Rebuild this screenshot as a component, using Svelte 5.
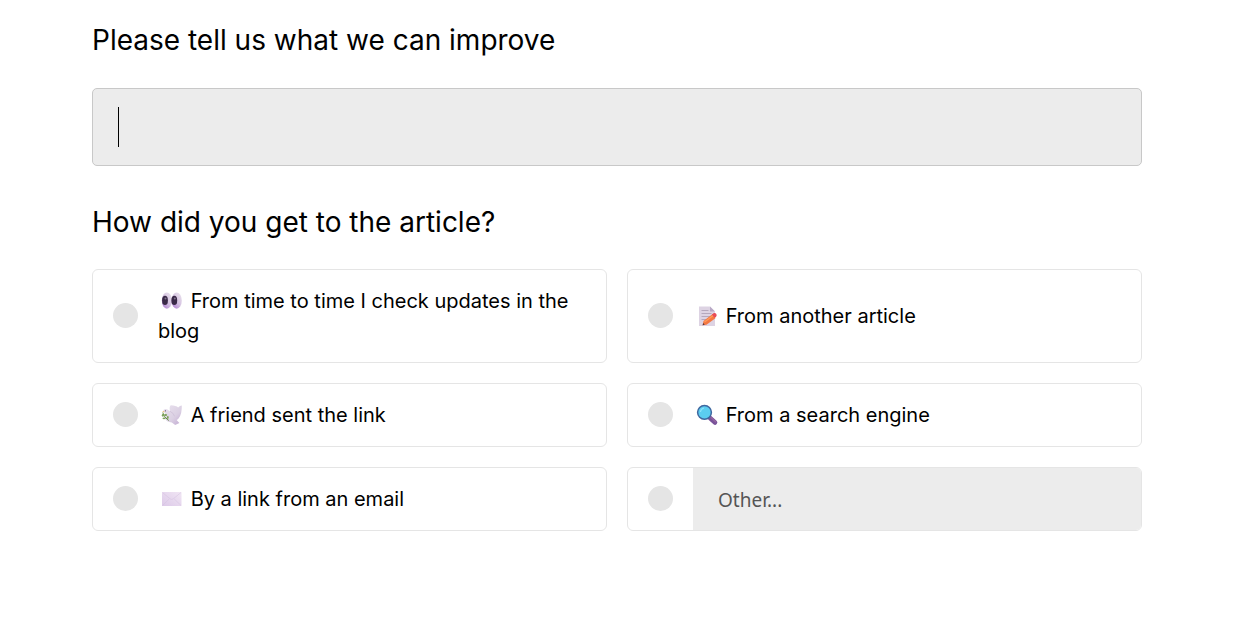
<script>
  const options = [
    { icon: 'eyes', label: 'From time to time I check updates in the blog' },
    { icon: 'memo', label: 'From another article' },
    { icon: 'dove', label: 'A friend sent the link' },
    { icon: 'search', label: 'From a search engine' },
    { icon: 'mail', label: 'By a link from an email' }
  ];
  let source = $state('');
  let improve = $state('');
  let other = $state('');
</script>

<main class="survey">
  <form>
    <label class="question" for="improve">Please tell us what we can improve</label>
    <div class="answer">
      <textarea id="improve" rows="1" bind:value={improve}></textarea>
      {#if !improve}<span class="caret"></span>{/if}
    </div>

    <fieldset>
      <legend class="question">How did you get to the article?</legend>
      <div class="options">
        {#each options as { icon, label }}
          <label class="option">
            <input type="radio" name="source" value={icon} bind:group={source} />
            <span class="text">
              <svg class="icon" viewBox="0 0 27 30" aria-hidden="true">
                {#if icon === 'eyes'}
                  <defs>
                    <linearGradient id="eye" x1=".1" y1="1" x2=".9" y2="0">
                      <stop offset="0" stop-color="#ae7dd2" />
                      <stop offset=".5" stop-color="#d6c4e2" />
                      <stop offset="1" stop-color="#e9e2ec" />
                    </linearGradient>
                  </defs>
                  <ellipse cx="8.9" cy="14.6" rx="5.1" ry="8.1" fill="url(#eye)" />
                  <ellipse cx="18.7" cy="14.6" rx="5.1" ry="8.1" fill="url(#eye)" />
                  <ellipse cx="7" cy="14.4" rx="2.9" ry="4.6" fill="#3a2a48" />
                  <ellipse cx="16.3" cy="14.4" rx="2.9" ry="4.6" fill="#3a2a48" />
                  <circle cx="7.5" cy="12.4" r="1" fill="#81738e" />
                  <circle cx="16.8" cy="12.4" r="1" fill="#81738e" />
                {:else if icon === 'memo'}
                  <path d="M6 5.5h11l5 5V25H6z" fill="#ddd3e3" />
                  <path d="M17 5.5v5h5z" fill="#b9a9c6" />
                  <path d="M8.5 9.5h7M8.5 12.5h10M8.5 15.5h9M8.5 18.5h5" stroke="#b5a8bd" stroke-width="1" />
                  <path d="m9.6 24.2.9-4.2 9.2-7 3 4-9.2 6.8z" fill="#f47742" />
                  <path d="m11.5 21 9-6.7" stroke="#ff9b58" stroke-width="1.4" />
                  <path d="m18.9 13.6 2-1.5q1.4-.6 2.4.9.9 1.5-.1 2.4l-1.6 1.4z" fill="#e84b57" />
                  <path d="m9.6 24.2.6-2.3 1.5 1.9z" fill="#553b43" />
                {:else if icon === 'dove'}
                  <defs>
                    <linearGradient id="feather" x1="0" y1="0" x2="1" y2="1">
                      <stop offset="0" stop-color="#ebe4f0" />
                      <stop offset=".6" stop-color="#dbd0e3" />
                      <stop offset="1" stop-color="#c0a9d1" />
                    </linearGradient>
                  </defs>
                  <path d="M4.8 11.3Q6 8.3 9 9.3l3 2Q11 7 12.7 5.3q5.5.2 7.4 2.3 1.8-1.8 3.7-2 .2 8.3-2.9 12.4-1 1.6-2.3 2.1l2.8 2.8-4.2 2-3.4-2.4q-5.5-.1-7-4.4-.8-3 .5-5-1.4-.4-1.8-1.8z" fill="url(#feather)" />
                  <path d="M12 11.3q3.8 1.7 4.5 5" fill="none" stroke="#cbbdd6" stroke-width=".7" />
                  <circle cx="7.4" cy="10.8" r=".6" fill="#51405e" />
                  <path d="m4 12 2.2-1v1.2z" fill="#edb34c" />
                  <path d="M4.8 12.5q.1 4.2 6 8" fill="none" stroke="#668b49" stroke-width="1" />
                  <g fill="#7da35a">
                    <ellipse cx="4.8" cy="15.3" rx="1" ry="1.4" />
                    <ellipse cx="7.6" cy="15" rx="1.6" ry=".9" />
                    <ellipse cx="6" cy="18.3" rx="1.5" ry=".9" />
                    <ellipse cx="9.8" cy="17.5" rx=".9" ry="1.4" />
                  </g>
                {:else if icon === 'search'}
                  <path d="m17 18 5 4.5" stroke="#79539a" stroke-width="4.6" stroke-linecap="round" />
                  <path d="m18 17.6 4.6 4.1" stroke="#95649f" stroke-width="1.4" stroke-linecap="round" />
                  <circle cx="11.5" cy="12.3" r="6.9" fill="#5bcdf0" stroke="#3f679f" stroke-width="1.5" />
                  <path d="M7.4 12q.4-3.4 3.7-4" fill="none" stroke="#8be3fa" stroke-width="1.2" />
                {:else}
                  <defs>
                    <linearGradient id="envelope" x1="1" y1="0" x2="0" y2="1">
                      <stop offset="0" stop-color="#f1e6f4" />
                      <stop offset="1" stop-color="#dcc9e8" />
                    </linearGradient>
                  </defs>
                  <rect x="4" y="8" width="19.5" height="14" rx=".5" fill="url(#envelope)" />
                  <path d="m4.5 8.5 7.7 6.4q1.5 1 3 0L23 8.5M4.5 21.5l6.8-6.6M23 21.5l-6.8-6.6" fill="none" stroke="#d3c0df" stroke-width=".5" />
                {/if}
              </svg>
              {label}
            </span>
          </label>
        {/each}
        <div class="option other">
          <input type="radio" name="source" value="other" bind:group={source} aria-label="Other" />
          <input class="other-text" type="text" placeholder="Other..." aria-label="Other source" bind:value={other} onfocus={() => (source = 'other')} />
        </div>
      </div>
    </fieldset>
  </form>
</main>

<style>
  :global(body) {
    background: #fff;
  }
  .survey {
    padding: 20px 102px 40px 92px;
    color: #000;
    font: 20px/30px Inter, sans-serif;
  }
  .question {
    display: block;
    padding: 0;
    font-size: 28px;
    font-variation-settings: "opsz" 20;
    line-height: 40px;
  }
  .answer {
    position: relative;
    margin: 28px 0 36px;
  }
  textarea {
    display: block;
    box-sizing: border-box;
    width: 100%;
    height: 78px;
    padding: 18px 25px;
    border: 1px solid #c8c8c8;
    border-radius: 5px;
    outline: 0;
    background: #ececec;
    color: #000;
    font: 28px/40px Inter, sans-serif;
    resize: none;
  }
  .caret {
    position: absolute;
    top: 19px;
    left: 26px;
    width: 1px;
    height: 40px;
    background: #000;
    pointer-events: none;
  }
  .answer:focus-within .caret {
    display: none;
  }
  fieldset {
    min-width: 0;
    margin: 0;
    padding: 0;
    border: 0;
  }
  .options {
    display: grid;
    grid-template-columns: repeat(2, minmax(0, 1fr));
    gap: 20px;
    margin-top: 27px;
  }
  .option {
    display: flex;
    align-items: center;
    gap: 20px;
    padding: 16px 20px;
    border: 1px solid #e5e5e5;
    border-radius: 6px;
    cursor: pointer;
  }
  input[type='radio'] {
    appearance: none;
    flex: none;
    width: 25px;
    height: 25px;
    margin: 0 0 2px;
    border-radius: 50%;
    background: #e5e5e5;
    cursor: pointer;
  }
  input[type='radio']:checked {
    border: 7px solid #e5e5e5;
    background: #333;
  }
  .icon {
    width: 27px;
    height: 30px;
    vertical-align: top;
  }
  .other {
    padding: 0 0 0 20px;
    overflow: hidden;
  }
  .other-text {
    flex: 1;
    align-self: stretch;
    box-sizing: border-box;
    min-width: 0;
    height: 62px;
    padding: 2px 25px 0;
    border: 0;
    outline: 0;
    background: #ececec;
    color: #000;
    font: 19px "Noto Sans", sans-serif;
  }
  .other-text::placeholder {
    color: #555;
    opacity: 1;
  }
</style>
